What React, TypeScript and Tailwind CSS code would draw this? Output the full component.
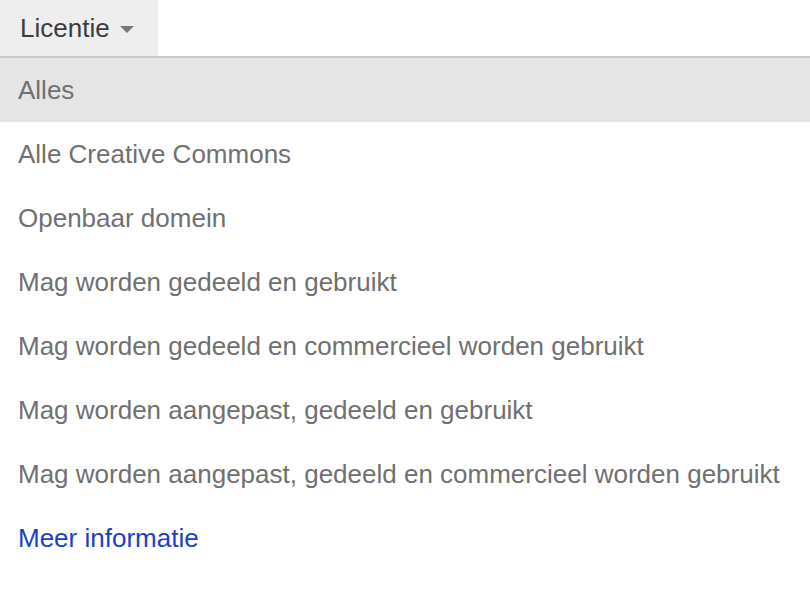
import React from 'react'

const options = [
  'Alles',
  'Alle Creative Commons',
  'Openbaar domein',
  'Mag worden gedeeld en gebruikt',
  'Mag worden gedeeld en commercieel worden gebruikt',
  'Mag worden aangepast, gedeeld en gebruikt',
  'Mag worden aangepast, gedeeld en commercieel worden gebruikt',
]

export default function App() {
  return (
    <div className="w-[810px] h-[590px] bg-white font-['Liberation_Sans',Arial,sans-serif] overflow-hidden">
      {/* Trigger */}
      <div className="flex h-[56px]">
        <button className="w-[158px] h-full bg-[#eeeeee] flex items-center pl-[20px] gap-[10px] text-[26px] text-[#3c3c3c]">
          <span>Licentie</span>
          <span className="w-0 h-0 border-l-[7px] border-r-[7px] border-t-[7px] border-l-transparent border-r-transparent border-t-[#777777] mt-[2px]" />
        </button>
      </div>
      <div className="h-[2px] bg-[#cccccc]" />

      {/* Menu */}
      <ul>
        {options.map((opt, i) => (
          <li
            key={opt}
            className={`h-[64px] flex items-center px-[18px] text-[26px] text-[#707070] ${i === 0 ? 'bg-[#e5e5e5]' : ''}`}
          >
            {opt}
          </li>
        ))}
        <li className="h-[64px] flex items-center px-[18px] text-[26px] text-[#1a3fcc]">
          <a href="#">Meer informatie</a>
        </li>
      </ul>
    </div>
  )
}
